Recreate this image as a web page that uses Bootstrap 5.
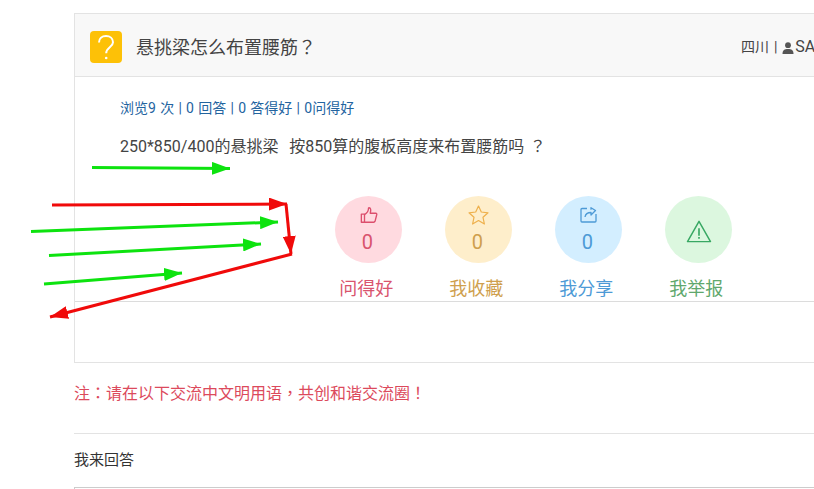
<!DOCTYPE html>
<html lang="zh-CN">
<head>
<meta charset="utf-8">
<title>悬挑梁怎么布置腰筋？</title>
<link href="https://cdn.jsdelivr.net/npm/bootstrap@5.3.0/dist/css/bootstrap.min.css" rel="stylesheet">
<style>
html,body{height:489px;overflow:hidden;background:#fff;}
body{font-family:Roboto,"Noto Sans CJK SC",sans-serif;color:#444;position:relative;}
.page-wrap{margin-left:74px;width:900px;padding-top:13px;}
.q-card{height:350px;border-radius:0;border-color:#e3e3e3;}
.q-head{height:63px;padding:4px 15px 0;background:#f8f8f8;border-color:#e3e3e3;border-radius:0!important;}
.q-logo{width:32px;height:32px;background:#fdc107;border-radius:4px;flex:none;}
.q-title{font-size:18px;margin-left:14px;color:#444;line-height:1;}
.q-loc{font-size:14px;margin-left:auto;width:217px;flex:none;white-space:nowrap;color:#444;word-spacing:1.500px;}
.q-loc-name{font-size:16px;margin-left:-4px;}
.cjk-p{font-family:"Noto Sans CJK TC",sans-serif;}
.q-meta{font-size:14px;color:#23649f;padding:21px 0 0 45px;line-height:20px;word-spacing:.8px;}
.q-text{font-size:16px;color:#444;padding:15px 0 0 45px;line-height:24px;white-space:pre;word-spacing:1.500px;}
.act-row{margin:37px 0 0 260px;gap:42.5px;}
.act-item{width:67.5px;}
.act-circle{width:67px;height:67px;border-radius:50%;padding-top:9px;}
.act-num{font-size:20px;line-height:24px;margin-top:5px;margin-right:3px;}
.act-label{font-size:18px;line-height:24px;margin-top:14px;margin-right:5px;white-space:nowrap;}
.ic-md{margin:1px 0;}
.ic-sm{margin:2px 0;}
.ic-warn{margin-bottom:6px;}
.t-red{color:#d9546e;}.b-red{background:#ffdae0;}
.t-org{color:#cf9f4e;}.b-org{background:#feeecb;}
.t-blu{color:#4d9ad6;}.b-blu{background:#d3eeff;}
.t-grn{color:#5fa86d;}.b-grn{background:#dcf7df;}
.act-rule{margin:0;border-top:1px solid #dcdcdc;opacity:1;}
.q-note{font-size:16px;color:#dc4a5c;line-height:24px;margin-top:17px;}
.q-hr{margin:27px 0 0;border-top:1px solid #e3e3e3;opacity:1;}
.q-answer{font-size:15px;color:#333;line-height:20px;margin-top:16px;}
.q-box{height:2px;margin-top:17px;border-top:1px solid #ccc;border-left:1px solid #ccc;}
.arrows{position:absolute;left:0;top:0;width:814px;height:489px;pointer-events:none;}
</style>
</head>
<body>
<div class="page-wrap">
  <div class="card q-card">
    <div class="card-header q-head d-flex align-items-center">
      <span class="q-logo d-flex align-items-center justify-content-center">
        <svg width="20" height="27" viewBox="0 0 20 27" fill="none" stroke="#fff" stroke-width="2"><path d="M3 8.500C3 4.500 6 2 10 2s7 2.500 7 6.200c0 5-6.800 5.300-6.800 11"/><circle cx="10.200" cy="24" r="1.300" fill="#fff" stroke="none"/></svg>
      </span>
      <span class="q-title">悬挑梁怎么布置腰筋<span class="cjk-p" lang="zh-TW">？</span></span>
      <span class="q-loc">四川 | <svg width="12" height="12" viewBox="0 0 12 12" fill="#555"><circle cx="6" cy="3.200" r="2.900"/><path d="M.5 12c0-3.800 2-5 5.500-5s5.500 1.200 5.500 5z"/></svg> <span class="q-loc-name">SA</span></span>
    </div>
    <div class="q-meta">浏览9 次 | 0 回答 | 0 答得好 | 0问得好</div>
    <div class="q-text">250*850/400的悬挑梁  按850算的腹板高度来布置腰筋吗 <span class="cjk-p" lang="zh-TW">？</span></div>
    <div class="act-row d-flex">
      <div class="act-item d-flex flex-column align-items-center">
        <div class="act-circle b-red t-red d-flex flex-column align-items-center">
          <svg class="ic-md" width="18" height="18" viewBox="0 0 20 20" fill="none" stroke="#dc4f6d" stroke-width="1.500" stroke-linejoin="round"><path d="M1.500 9h3.500v9H1.500z"/><path d="M5 9.500c3-1.500 4.500-4 4.500-7.500 2.500-.5 3 2.500 1.800 6h6.200c1 0 1.500 1.200 1 2l-1.800 7c-.3.7-.8 1-1.500 1H5"/></svg>
          <div class="act-num">0</div>
        </div>
        <div class="act-label t-red">问得好</div>
      </div>
      <div class="act-item d-flex flex-column align-items-center">
        <div class="act-circle b-org t-org d-flex flex-column align-items-center">
          <svg width="21" height="20" viewBox="0 0 21 20" fill="none" stroke="#eeb04c" stroke-width="1.200" stroke-linejoin="round"><path d="M10.500 1l2.800 6 6.700.8-5 4.500 1.400 6.700-5.900-3.400L4.600 19 6 12.300 1 7.800 7.700 7z"/></svg>
          <div class="act-num">0</div>
        </div>
        <div class="act-label t-org">我收藏</div>
      </div>
      <div class="act-item d-flex flex-column align-items-center">
        <div class="act-circle b-blu t-blu d-flex flex-column align-items-center">
          <svg class="ic-sm" width="17" height="16" viewBox="0 0 17 16" fill="none" stroke="#4d9ad6" stroke-width="1.300" stroke-linejoin="round"><path d="M7 1.500H2a1 1 0 0 0-1 1v11.500a1 1 0 0 0 1 1h13a1 1 0 0 0 1-1V7"/><path d="M5 10c.5-3 3-4.500 6-4.500V8L15.500 3.500 11 .7v2.100"/></svg>
          <div class="act-num">0</div>
        </div>
        <div class="act-label t-blu">我分享</div>
      </div>
      <div class="act-item d-flex flex-column align-items-center">
        <div class="act-circle b-grn t-grn d-flex align-items-center justify-content-center">
          <svg class="ic-warn" width="26" height="23" viewBox="0 0 28 25" fill="none" stroke="#38a863" stroke-width="1.600" stroke-linejoin="round"><path d="M14 1.500L1.500 23.500h25z"/><path d="M14 9v8M14 18.500v2" stroke-width="1.800"/></svg>
        </div>
        <div class="act-label t-grn">我举报</div>
      </div>
    </div>
    <hr class="act-rule">
  </div>
  <div class="q-note">注<span class="cjk-p" lang="zh-TW">：</span>请在以下交流中文明用语<span class="cjk-p" lang="zh-TW">，</span>共创和谐交流圈<span class="cjk-p" lang="zh-TW">！</span></div>
  <hr class="q-hr">
  <div class="q-answer">我来回答</div>
  <div class="q-box"></div>
</div>
<svg class="arrows" viewBox="0 0 814 489" fill="none" stroke-width="3">
  <defs>
    <marker id="hg" markerUnits="userSpaceOnUse" markerWidth="18" markerHeight="13" refX="18" refY="6.500" orient="auto"><path d="M0 0L18 6.500 0 13z" fill="#0de30f"/></marker>
    <marker id="hr" markerUnits="userSpaceOnUse" markerWidth="18" markerHeight="13" refX="18" refY="6.500" orient="auto"><path d="M0 0L18 6.500 0 13z" fill="#f00a0a"/></marker>
  </defs>
  <g stroke="#0de30f">
    <path d="M92 167.500L230 168.500" marker-end="url(#hg)"/>
    <path d="M31 231.500L278 222" marker-end="url(#hg)"/>
    <path d="M49 255.500L261 244" marker-end="url(#hg)"/>
    <path d="M44 284L182 273" marker-end="url(#hg)"/>
  </g>
  <g stroke="#f00a0a">
    <path d="M52 205L287 204" marker-end="url(#hr)"/>
    <path d="M286 204L291 254" marker-end="url(#hr)"/>
    <path d="M292 254L50 317" marker-end="url(#hr)"/>
  </g>
</svg>
<script src="https://cdn.jsdelivr.net/npm/bootstrap@5.3.0/dist/js/bootstrap.bundle.min.js"></script>
</body>
</html>
